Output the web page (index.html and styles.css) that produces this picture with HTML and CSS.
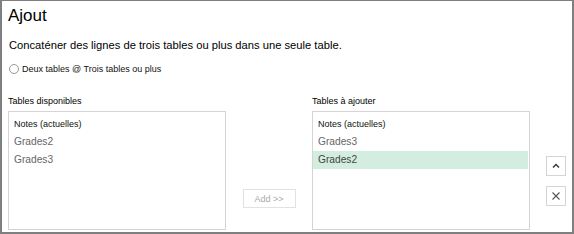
FILE: index.html
```html
<!DOCTYPE html>
<html lang="fr">
<head>
    <meta charset="UTF-8">
    <title>Ajout</title>
    <link rel="stylesheet" href="styles.css">
</head>
<body>
    <div class="dialog">
        <h1>Ajout</h1>
        <p class="desc">Concaténer des lignes de trois tables ou plus dans une seule table.</p>

        <label class="radio"><span class="radio-dot"></span> Deux tables @ Trois tables ou plus</label>

        <div class="lists">
            <div class="col">
                <div class="col-title">Tables disponibles</div>
                <div class="listbox">
                    <div class="item current">Notes (actuelles)</div>
                    <div class="item">Grades2</div>
                    <div class="item">Grades3</div>
                </div>
            </div>

            <div class="middle">
                <button class="add-button">Add &gt;&gt;</button>
            </div>

            <div class="col">
                <div class="col-title">Tables à ajouter</div>
                <div class="listbox">
                    <div class="item current">Notes (actuelles)</div>
                    <div class="item">Grades3</div>
                    <div class="item selected">Grades2</div>
                </div>
            </div>

            <div class="side">
                <button class="icon-button">
                    <svg width="10" height="10" viewBox="0 0 10 10"><path d="M2 6.5 L5 3.5 L8 6.5" fill="none" stroke="#333" stroke-width="1.4"/></svg>
                </button>
                <button class="icon-button">
                    <svg width="10" height="10" viewBox="0 0 10 10"><path d="M1.5 1.5 L8.5 8.5 M8.5 1.5 L1.5 8.5" fill="none" stroke="#555" stroke-width="1.1"/></svg>
                </button>
            </div>
        </div>
    </div>
</body>
</html>
```

FILE: styles.css
```css
body {
    margin: 0;
    padding: 0;
    background-color: #fff;
    font-family: 'Liberation Sans', Arial, sans-serif;
}

.dialog {
    width: 574px;
    height: 234px;
    box-sizing: border-box;
    border: 2px solid #7f7f7f;
    border-top-width: 1px;
    padding: 0 0 0 6px;
    color: #000;
}

h1 {
    margin: 0;
    padding-top: 3px;
    font-size: 17px;
    font-weight: normal;
    line-height: 24px;
}

.desc {
    margin: 9px 0 0 1px;
    font-size: 11.2px;
    line-height: 16px;
}

.radio {
    display: flex;
    align-items: center;
    margin-top: 9px;
    margin-left: 1px;
    font-size: 9px;
    line-height: 14px;
    color: #111;
}

.radio-dot {
    width: 8px;
    height: 8px;
    border: 1px solid #999;
    border-radius: 50%;
    margin-right: 3px;
}

.lists {
    display: flex;
    margin-top: 18px;
}

.col-title {
    font-size: 9px;
    line-height: 14px;
    margin-bottom: 3px;
}

.listbox {
    width: 216px;
    height: 114px;
    border: 1px solid #d4d4d4;
    padding-top: 3px;
}

.item {
    font-size: 10.2px;
    line-height: 18px;
    padding-left: 5px;
    color: #666;
}

.item.current {
    font-size: 9px;
    color: #111;
}

.item.selected {
    background-color: #d3eee0;
    color: #444;
    margin-right: 1px;
}

.middle {
    width: 86px;
    display: flex;
    align-items: flex-end;
    justify-content: center;
    padding-bottom: 22px;
}

.add-button {
    width: 53px;
    height: 19px;
    background-color: #fff;
    border: 1px solid #e2e2e2;
    color: #aaa;
    font-family: inherit;
    font-size: 9px;
    padding: 0;
}

.side {
    display: flex;
    flex-direction: column;
    gap: 10px;
    margin-left: 16px;
    padding-top: 62px;
}

.icon-button {
    width: 20px;
    height: 20px;
    background-color: #fff;
    border: 1px solid #d4d4d4;
    padding: 0;
    display: flex;
    align-items: center;
    justify-content: center;
}
```
